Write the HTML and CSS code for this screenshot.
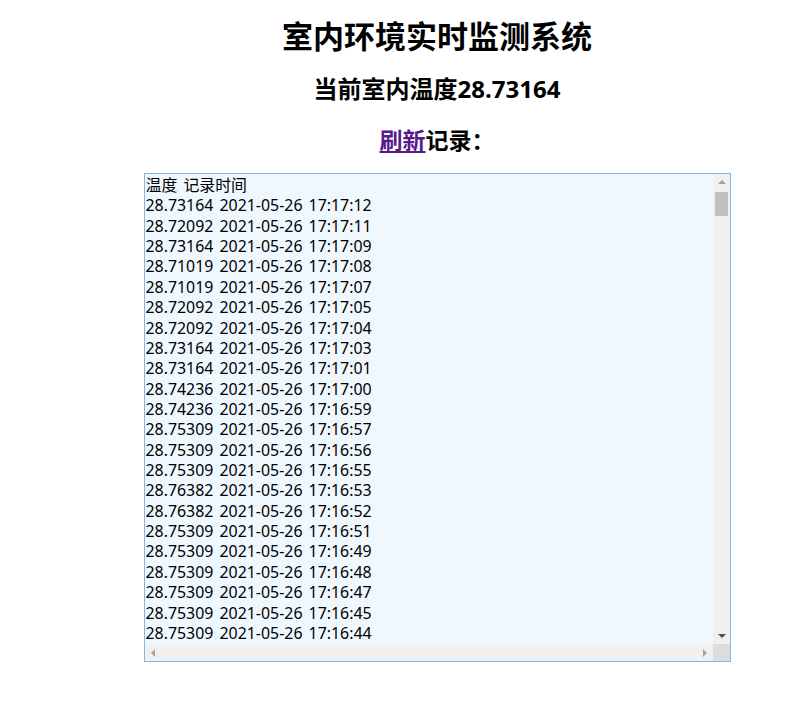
FILE: index.html
```html
<!DOCTYPE html>
<html lang="zh-CN">
<head>
<meta charset="utf-8">
<title>室内环境实时监测系统</title>
<link rel="stylesheet" href="styles.css">
</head>
<body>
<main class="page">
  <h1 class="title">室内环境实时监测系统</h1>
  <h2 class="current">当前室内温度28.73164</h2>
  <h3 class="records"><a class="refresh" href="#">刷新</a>记录：</h3>
  <div class="log">
    <div class="log-text">
      <div>温度 记录时间</div>
      <div>28.73164 2021-05-26 17:17:12</div>
      <div>28.72092 2021-05-26 17:17:11</div>
      <div>28.73164 2021-05-26 17:17:09</div>
      <div>28.71019 2021-05-26 17:17:08</div>
      <div>28.71019 2021-05-26 17:17:07</div>
      <div>28.72092 2021-05-26 17:17:05</div>
      <div>28.72092 2021-05-26 17:17:04</div>
      <div>28.73164 2021-05-26 17:17:03</div>
      <div>28.73164 2021-05-26 17:17:01</div>
      <div>28.74236 2021-05-26 17:17:00</div>
      <div>28.74236 2021-05-26 17:16:59</div>
      <div>28.75309 2021-05-26 17:16:57</div>
      <div>28.75309 2021-05-26 17:16:56</div>
      <div>28.75309 2021-05-26 17:16:55</div>
      <div>28.76382 2021-05-26 17:16:53</div>
      <div>28.76382 2021-05-26 17:16:52</div>
      <div>28.75309 2021-05-26 17:16:51</div>
      <div>28.75309 2021-05-26 17:16:49</div>
      <div>28.75309 2021-05-26 17:16:48</div>
      <div>28.75309 2021-05-26 17:16:47</div>
      <div>28.75309 2021-05-26 17:16:45</div>
      <div>28.75309 2021-05-26 17:16:44</div>
    </div>
    <div class="vbar">
      <span class="arrow up"></span>
      <span class="vtrack"><span class="vthumb"></span></span>
      <span class="arrow down"></span>
    </div>
    <div class="hbar">
      <span class="arrow left"></span>
      <span class="htrack"></span>
      <span class="arrow right"></span>
    </div>
    <div class="corner"></div>
  </div>
</main>
</body>
</html>
```
FILE: styles.css
```css
html, body {
  margin: 0;
  padding: 0;
  background: #ffffff;
  overflow: hidden;
}

.page {
  padding: 0 8px 0 82px;
  text-align: center;
  font-family: "Noto Sans", "Noto Sans CJK SC", sans-serif;
  color: #000;
}

.title {
  margin: 20px 0 0;
  font-size: 31px;
  line-height: 32px;
  font-weight: 700;
}

.current {
  margin: 22px 0 0;
  font-size: 24px;
  line-height: 30px;
  font-weight: 700;
}

.records {
  margin: 24px 0 0;
  font-size: 23px;
  line-height: 24px;
  font-weight: 700;
}

.refresh {
  color: #551a8b;
  text-decoration: underline;
}

.log {
  margin: 21px auto 0;
  width: 587px;
  height: 489px;
  box-sizing: border-box;
  border: 1px solid #85b5ea;
  background: #f0f8ff;
  display: grid;
  grid-template-columns: 1fr 17px;
  grid-template-rows: 1fr 17px;
  text-align: left;
}

.log-text {
  overflow: hidden;
  padding: 1px 2px 1px 1px;
  font-size: 15.9px;
  line-height: 20.36px;
  word-spacing: 2px;
  color: #000;
  white-space: nowrap;
}

.vbar {
  background: #f0f0f0;
  display: flex;
  flex-direction: column;
}

.hbar {
  background: #f0f0f0;
  display: flex;
  flex-direction: row;
}

.corner {
  background: #dcdcdc;
}

.arrow {
  width: 17px;
  height: 17px;
  flex: none;
  position: relative;
}

.arrow::after {
  content: "";
  position: absolute;
  width: 0;
  height: 0;
  border-style: solid;
}

.arrow.up::after {
  left: 5px; top: 6px;
  border-width: 0 4px 4px 4px;
  border-color: transparent transparent #a3a3a3 transparent;
}

.arrow.down::after {
  left: 5px; top: 7px;
  border-width: 4px 4px 0 4px;
  border-color: #505050 transparent transparent transparent;
}

.arrow.left::after {
  left: 6px; top: 5px;
  border-width: 4px 4px 4px 0;
  border-color: transparent #a3a3a3 transparent transparent;
}

.arrow.right::after {
  left: 7px; top: 5px;
  border-width: 4px 0 4px 4px;
  border-color: transparent transparent transparent #a3a3a3;
}

.vtrack {
  flex: 1;
  display: flex;
  flex-direction: column;
  padding: 1px 2px 0;
}

.vthumb {
  height: 24px;
  background: #c1c1c1;
}

.htrack {
  flex: 1;
}
```
